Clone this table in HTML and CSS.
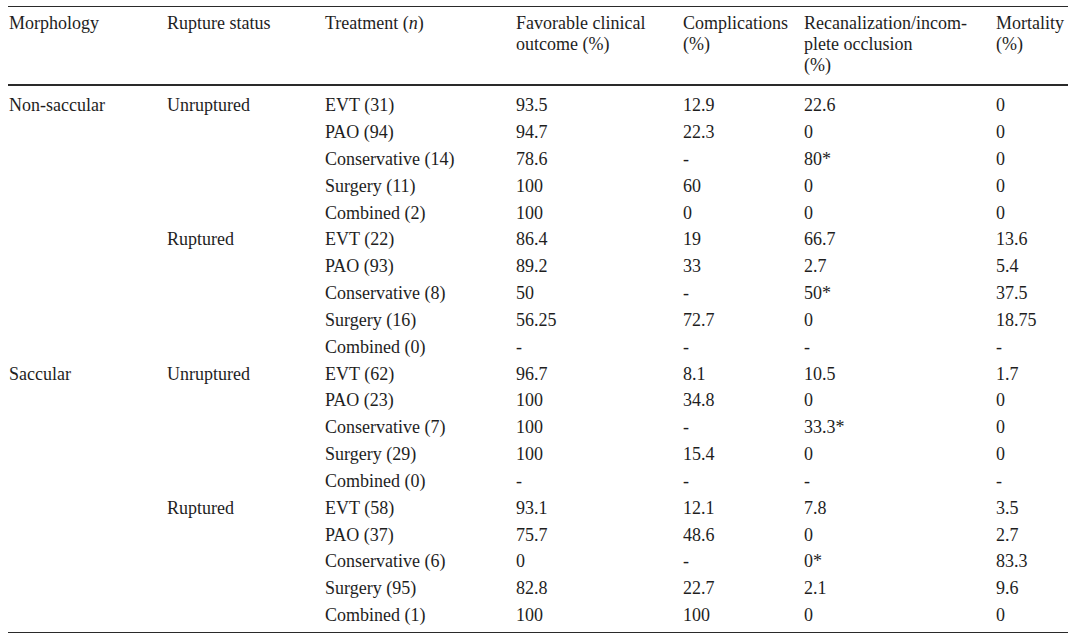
FILE: index.html
```html
<!DOCTYPE html>
<html>
<head>
<meta charset="utf-8">
<link rel="stylesheet" href="styles.css">
</head>
<body>
<table class="data">
  <colgroup>
    <col class="c1"><col class="c2"><col class="c3"><col class="c4"><col class="c5"><col class="c6"><col class="c7">
  </colgroup>
  <thead>
    <tr>
      <th>Morphology</th>
      <th>Rupture status</th>
      <th>Treatment (<i>n</i>)</th>
      <th>Favorable clinical<br>outcome (%)</th>
      <th>Complications<br>(%)</th>
      <th>Recanalization/incom-<br>plete occlusion<br>(%)</th>
      <th>Mortality<br>(%)</th>
    </tr>
  </thead>
  <tbody>
    <tr class="first"><td>Non-saccular</td><td>Unruptured</td><td>EVT (31)</td><td>93.5</td><td>12.9</td><td>22.6</td><td>0</td></tr>
    <tr><td></td><td></td><td>PAO (94)</td><td>94.7</td><td>22.3</td><td>0</td><td>0</td></tr>
    <tr><td></td><td></td><td>Conservative (14)</td><td>78.6</td><td>-</td><td>80*</td><td>0</td></tr>
    <tr><td></td><td></td><td>Surgery (11)</td><td>100</td><td>60</td><td>0</td><td>0</td></tr>
    <tr><td></td><td></td><td>Combined (2)</td><td>100</td><td>0</td><td>0</td><td>0</td></tr>
    <tr><td></td><td>Ruptured</td><td>EVT (22)</td><td>86.4</td><td>19</td><td>66.7</td><td>13.6</td></tr>
    <tr><td></td><td></td><td>PAO (93)</td><td>89.2</td><td>33</td><td>2.7</td><td>5.4</td></tr>
    <tr><td></td><td></td><td>Conservative (8)</td><td>50</td><td>-</td><td>50*</td><td>37.5</td></tr>
    <tr><td></td><td></td><td>Surgery (16)</td><td>56.25</td><td>72.7</td><td>0</td><td>18.75</td></tr>
    <tr><td></td><td></td><td>Combined (0)</td><td>-</td><td>-</td><td>-</td><td>-</td></tr>
    <tr><td>Saccular</td><td>Unruptured</td><td>EVT (62)</td><td>96.7</td><td>8.1</td><td>10.5</td><td>1.7</td></tr>
    <tr><td></td><td></td><td>PAO (23)</td><td>100</td><td>34.8</td><td>0</td><td>0</td></tr>
    <tr><td></td><td></td><td>Conservative (7)</td><td>100</td><td>-</td><td>33.3*</td><td>0</td></tr>
    <tr><td></td><td></td><td>Surgery (29)</td><td>100</td><td>15.4</td><td>0</td><td>0</td></tr>
    <tr><td></td><td></td><td>Combined (0)</td><td>-</td><td>-</td><td>-</td><td>-</td></tr>
    <tr><td></td><td>Ruptured</td><td>EVT (58)</td><td>93.1</td><td>12.1</td><td>7.8</td><td>3.5</td></tr>
    <tr><td></td><td></td><td>PAO (37)</td><td>75.7</td><td>48.6</td><td>0</td><td>2.7</td></tr>
    <tr><td></td><td></td><td>Conservative (6)</td><td>0</td><td>-</td><td>0*</td><td>83.3</td></tr>
    <tr><td></td><td></td><td>Surgery (95)</td><td>82.8</td><td>22.7</td><td>2.1</td><td>9.6</td></tr>
    <tr class="last"><td></td><td></td><td>Combined (1)</td><td>100</td><td>100</td><td>0</td><td>0</td></tr>
  </tbody>
</table>
</body>
</html>
```
FILE: styles.css
```css
html, body {
  margin: 0;
  padding: 0;
  background: #ffffff;
}
body {
  font-family: "Liberation Serif", "Times New Roman", serif;
  font-size: 18px;
  color: #1e1e1e;
}
.data {
  margin: 6px 0 0 8px;
  width: 1060px;
  border-collapse: collapse;
  table-layout: fixed;
  border-top: 1px solid #2a2a2a;
  border-bottom: 1.5px solid #2a2a2a;
}
.c1 { width: 158px; }
.c2 { width: 158px; }
.c3 { width: 191px; }
.c4 { width: 167px; }
.c5 { width: 121px; }
.c6 { width: 192px; }
.c7 { width: 73px; }
.data th {
  font-weight: normal;
  text-align: left;
  vertical-align: top;
  line-height: 20.8px;
  padding: 6px 0 8.5px 1px;
  border-bottom: 2px solid #2a2a2a;
}
.data td {
  text-align: left;
  vertical-align: middle;
  height: 26.84px;
  line-height: 20px;
  padding: 0 0 0 1px;
  white-space: nowrap;
}
.data tr.first td { padding-top: 6px; }
.data tr.last td { padding-bottom: 4px; }
```
